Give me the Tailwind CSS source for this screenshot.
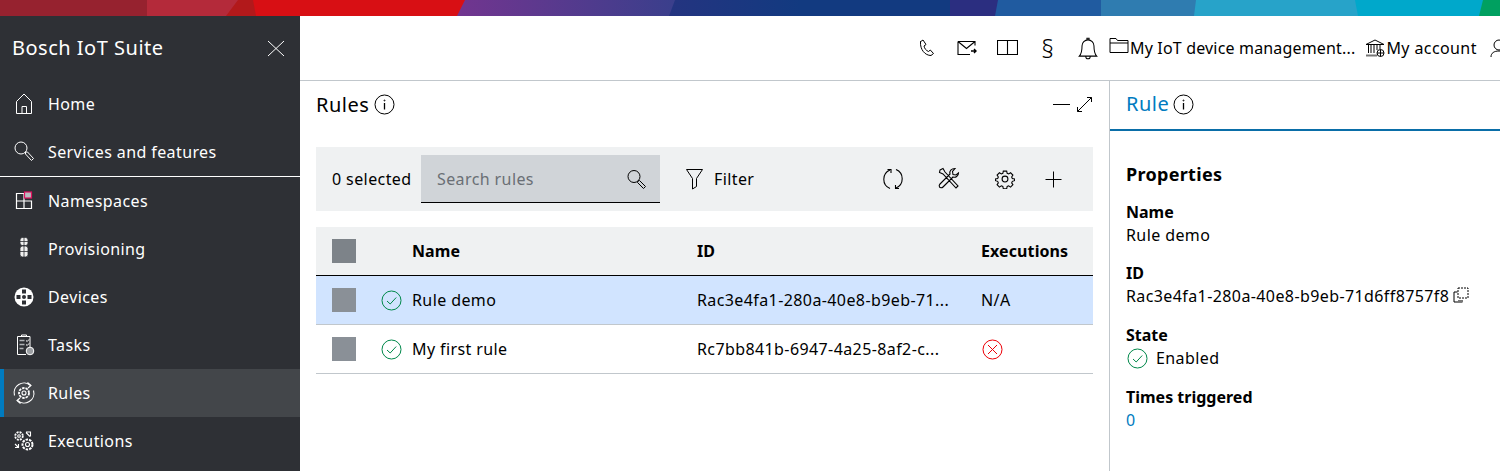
<!DOCTYPE html>
<html lang="en">
  <head>
    <meta charset="UTF-8" />
    <title>Bosch IoT Suite - Rules</title>
    <script src="https://cdn.jsdelivr.net/npm/@tailwindcss/browser@4"></script>
  </head>
  <body class="w-[1500px] h-[471px] overflow-hidden bg-white font-['Noto_Sans',sans-serif] text-base tracking-[0.4px] text-black">
    <!-- colour band -->
    <svg class="block w-[1500px] h-4" viewBox="0 0 1500 16">
      <defs>
        <linearGradient id="purple" gradientUnits="userSpaceOnUse" x1="460" x2="675" y1="0" y2="0"><stop offset="0" stop-color="#71358f" /><stop offset="1" stop-color="#3a3f8c" /></linearGradient>
        <linearGradient id="navy" gradientUnits="userSpaceOnUse" x1="670" x2="800" y1="0" y2="0"><stop offset="0" stop-color="#243480" /><stop offset="1" stop-color="#123a80" /></linearGradient>
      </defs>
      <rect width="1500" height="16" fill="#96222f" />
      <rect x="147" width="1353" height="16" fill="#b42a3a" />
      <polygon points="238,0 1500,0 1500,16 226,16" fill="#b2191b" />
      <polygon points="253,0 1500,0 1500,16 256,16" fill="#d80f14" />
      <polygon points="465,0 1500,0 1500,16 457,16" fill="url(#purple)" />
      <polygon points="675,0 1500,0 1500,16 669,16" fill="url(#navy)" />
      <rect x="950" width="550" height="16" fill="#2b2e80" />
      <polygon points="998,0 1500,0 1500,16 995,16" fill="#205ba0" />
      <rect x="1101" width="399" height="16" fill="#2f7cb0" />
      <polygon points="1196,0 1500,0 1500,16 1194,16" fill="#27a3c9" />
      <polygon points="1355,0 1500,0 1500,16 1358,16" fill="#00a8cb" />
      <polygon points="1483,0 1500,0 1500,16 1479,16" fill="#00a060" />
    </svg>

    <div class="flex h-[455px]">
      <!-- sidebar -->
      <aside class="w-[300px] shrink-0 bg-[#2e3035] text-white">
        <div class="flex items-center justify-between h-16 pl-3 pr-[15px]">
          <span class="text-xl tracking-[0.5px]">Bosch IoT Suite</span>
          <svg class="w-[18px] h-[18px]" viewBox="0 0 18 18" fill="none" stroke="#fff" stroke-width="1"><path d="M1 2l16 15M17 2L1 17" /></svg>
        </div>
        <a class="flex items-center h-12 pl-3 gap-3">
          <svg class="w-6 h-6 shrink-0" viewBox="0 0 24 24" fill="none" stroke="#fff" stroke-width="1"><path d="M4.500 21.500v-12L12 2l7.500 7.500v12zM10 21.500v-7h4.500v7" /></svg>
          <span>Home</span>
        </a>
        <a class="flex items-center h-12 pl-3 gap-3">
          <svg class="w-6 h-6 shrink-0" viewBox="0 0 24 24" fill="none" stroke="#fff" stroke-width="1"><circle cx="9" cy="8" r="6" /><path d="M13.500 12l2 0 6 6.500-2 2-6-6.500z" /></svg>
          <span>Services and features</span>
        </a>
        <div class="h-px bg-white"></div>
        <a class="flex items-center h-12 pl-3 gap-3">
          <svg class="w-6 h-6 shrink-0" viewBox="0 0 24 24" fill="none" stroke="#fff" stroke-width="1.200"><path d="M4.500 4.500h7.500v15H4.500zM4.500 12h15v7.500h-7.500" /><rect x="12.500" y="3" width="7" height="6" fill="#b9bcc0" stroke="#e0115f" /></svg>
          <span>Namespaces</span>
        </a>
        <a class="flex items-center h-12 pl-3 gap-3">
          <svg class="w-6 h-6 shrink-0" viewBox="0 0 24 24" fill="#f0f0f0" stroke="#2e3035" stroke-width="0.800"><rect x="8" y="0.500" width="8" height="8" rx="2.500" /><rect x="8" y="9" width="8" height="11" rx="2.500" /><path d="M12 1v19M8 4.500h8M8 14.500h8" fill="none" /></svg>
          <span>Provisioning</span>
        </a>
        <a class="flex items-center h-12 pl-3 gap-3">
          <svg class="w-6 h-6 shrink-0" viewBox="0 0 24 24"><circle cx="12" cy="12" r="9.500" fill="#fff" /><circle cx="12" cy="12" r="2" fill="#2e3035" /><g fill="#2e3035"><rect x="10" y="4.500" width="4" height="4" /><rect x="10" y="15.500" width="4" height="4" /><rect x="4.500" y="10" width="4" height="4" /><rect x="15.500" y="10" width="4" height="4" /></g></svg>
          <span>Devices</span>
        </a>
        <a class="flex items-center h-12 pl-3 gap-3">
          <svg class="w-6 h-6 shrink-0" viewBox="0 0 24 24" fill="none" stroke="#fff" stroke-width="1"><path d="M14 21.500H5.500V3.500H18v11M9.500 3.500V2h5v1.500" /><path d="M7.500 7.500h5M7.500 11.500h5M7.500 15.500h4" stroke="#b0b3b7" stroke-width="1.500" /><path d="M14 7.500l1.200 1 2-2.200M14 11.500l1.200 1 2-2.200" /><circle cx="18" cy="18" r="3.800" fill="#9b9ea2" /></svg>
          <span>Tasks</span>
        </a>
        <a class="flex items-center h-12 pl-2 gap-3 bg-[#43464a] border-l-4 border-[#007bc0]">
          <svg class="w-6 h-6 shrink-0" viewBox="0 0 24 24" fill="none" stroke="#fff" stroke-width="1.100"><path d="M2.500 14.500A9.800 9.800 0 0 1 18.500 4.500M21.500 9.500A9.800 9.800 0 0 1 5.500 19.500" /><path d="M15.500 1.500l3.500 3-3 2.500M8.500 22.500l-3.500-3 3-2.500" /><circle cx="12" cy="12" r="2" /><circle cx="12" cy="12" r="5" stroke-dasharray="2.500 1" stroke-width="1.800" /></svg>
          <span>Rules</span>
        </a>
        <a class="flex items-center h-12 pl-3 gap-3">
          <svg class="w-6 h-6 shrink-0" viewBox="0 0 24 24" fill="none" stroke="#fff" stroke-width="1.100"><circle cx="7" cy="7" r="3.800" stroke-dasharray="2 1" stroke-width="1.800" /><circle cx="7" cy="7" r="1.300" /><circle cx="15.500" cy="15.500" r="5" stroke-dasharray="2.500 1" stroke-width="2" /><circle cx="15.500" cy="15.500" r="2" /><path d="M14 3.500l4 4M14 3h4.500v4.500M3 15l3 3M6.500 15v3.500H3" /></svg>
          <span>Executions</span>
        </a>
      </aside>

      <div class="flex-1 flex flex-col min-w-0">
        <!-- header -->
        <header class="h-[65px] shrink-0 flex items-center pl-[617px] border-b border-[#c1c7cc] overflow-hidden">
          <svg class="shrink-0 w-[20px] h-[20px] mr-[20px]" viewBox="0 0 20 20" fill="none" stroke="#000" stroke-width="1"><path d="M3 4l3-2 3 4.500-2 1.500c.5 2.500 2 4.500 4.500 5.500l1.800-1.500 3.200 3.500-2.500 2c-6 0-11-6-10.500-13.500z" /></svg>
          <svg class="shrink-0 w-[20px] h-[20px] mr-[20px]" viewBox="0 0 20 20" fill="none" stroke="#000" stroke-width="1.100"><path d="M1 3.500h17v4M1 3.500v13h12M1 3.500l8.500 7 8.500-7" /><path d="M14 13h5M17 11l2 2-2 2" stroke-width="1.400" /></svg>
          <svg class="shrink-0 w-[21px] h-[20px] mr-[20px]" viewBox="0 0 21 20" fill="none" stroke="#000" stroke-width="1.100"><path d="M0.500 2.500h10v14h-10zM10.500 2.500h10v14h-10z" /></svg>
          <span class="shrink-0 w-5 mr-[19px] text-center text-[25px] leading-none font-light">§</span>
          <svg class="shrink-0 w-[22px] h-[26px] mr-[10px]" viewBox="0 0 20 24" fill="none" stroke="#000" stroke-width="0.950"><path d="M2 19.500c2-2 2.500-4 2.500-9.500a5.500 5.500 0 0 1 11 0c0 5.500.5 7.500 2.500 9.500zM8 20c0 2.500 4 2.500 4 0M9 4.500V3h2v1.500" /></svg>
          <svg class="shrink-0 w-[20px] h-[20px] mr-[1px] -translate-y-[2px]" viewBox="0 0 20 20" fill="none" stroke="#000" stroke-width="1"><path d="M1 16.500V2.500h6l1.500 2h10.500v12zM1 7h18" /></svg>
          <span class="shrink-0 whitespace-nowrap tracking-[0.17px]">My IoT device management...</span>
          <svg class="shrink-0 w-[20px] h-[20px] ml-[10px] mr-[1px]" viewBox="0 0 20 20" fill="none" stroke="#000" stroke-width="1"><path d="M1 6.500L10 2l9 4.500zM3.500 7v8M6 7v8M9 7v8M12 7v5M15 7v4" /><path d="M1 17.500h11" stroke="#777" stroke-width="2" /><circle cx="15.500" cy="15" r="3.500" fill="#fff" /><path d="M12 15h7M15.500 11.500v7" /></svg>
          <span class="shrink-0 whitespace-nowrap">My account</span>
          <svg class="shrink-0 w-[20px] h-[20px] ml-[12px]" viewBox="0 0 20 20" fill="none" stroke="#000" stroke-width="1"><circle cx="10" cy="7" r="5" /><path d="M2 19c0-4 3-6 8-6s8 2 8 6" /></svg>
        </header>

        <div class="flex-1 flex min-h-0">
          <!-- rules list -->
          <main class="w-[810px] shrink-0 border-r border-[#c1c7cc] pl-4 pr-4">
            <div class="flex items-center justify-between h-[47px]">
              <div class="flex items-center gap-[5px] text-xl tracking-[0.5px]">
                <span>Rules</span>
                <svg class="w-[21px] h-[21px]" viewBox="0 0 21 21" fill="none" stroke="#000" stroke-width="1"><circle cx="10.500" cy="10.500" r="9.500" /><path d="M10.500 9v6.500" stroke-width="1.300" /><circle cx="10.500" cy="6.500" r="0.500" /></svg>
              </div>
              <div class="flex items-center gap-[6px]">
                <span class="block w-[17px] h-px bg-black"></span>
                <svg class="w-[17px] h-[17px]" viewBox="0 0 17 17" fill="none" stroke="#000" stroke-width="1"><path d="M1.500 15.500L15.500 1.500M11 1.500h4.500V6M1.500 11v4.500H6" /></svg>
              </div>
            </div>

            <div class="mt-[19px] flex items-center h-16 bg-[#eff1f2] pl-4 pr-7">
              <span class="w-[89px] shrink-0">0 selected</span>
              <div class="flex items-center justify-between w-[239px] h-12 pl-4 pr-3 bg-[#d0d4d8] border-b border-black">
                <span class="text-[#6a6f75]">Search rules</span>
                <svg class="w-[24px] h-[24px]" viewBox="0 0 24 24" fill="none" stroke="#000" stroke-width="1"><circle cx="10" cy="9.500" r="6" /><path d="M14 14l1.500-.5 6 6-2 2-6-6z" /></svg>
              </div>
              <svg class="ml-[25px] w-[20px] h-[22px]" viewBox="0 0 20 22" fill="none" stroke="#000" stroke-width="1"><path d="M1.500 1.500h16l-6 9v8l-4 2.500V10.500z" /></svg>
              <span class="ml-[9px]">Filter</span>
              <svg class="ml-auto w-[24px] h-[24px]" viewBox="0 0 24 24" fill="none" stroke="#000" stroke-width="1.100"><path d="M9 21.500A10 10 0 0 1 9 3M15 2.500A10 10 0 0 1 15 21" /><path d="M6.500 2.500H10V6M18 21.500h-3.500V18" /></svg>
              <svg class="ml-[32px] w-[24px] h-[24px]" viewBox="0 0 24 24" fill="none" stroke="#000" stroke-width="1.100"><path d="M3 3l3-1.500L8 5l13 14-2 2L6 7 2.500 5.500zM21.500 6c0 3-3 5-5.500 4L6 20c-1 1-3 1-3.500 0S2 18 3 17L13 7c-1-3 1.500-5.500 5-5.500L15.500 4.500l.5 3 3 .5z" /></svg>
              <svg class="ml-[34px] w-[20px] h-[20px]" viewBox="0 0 24 24" fill="none" stroke="#000" stroke-width="1.300"><circle cx="12" cy="12" r="3.500" /><path d="M10 2.500h4l.6 2.700 1.800.8 2.300-1.500 2.800 2.800-1.500 2.300.8 1.800 2.700.6v2l-2.700.8-.8 1.800 1.500 2.300-2.800 2.800-2.300-1.500-1.800.8-.6 2.700h-4l-.6-2.700-1.800-.8-2.300 1.500-2.800-2.800 1.500-2.300-.8-1.800-2.700-.8v-2l2.700-.6.8-1.800-1.500-2.300 2.800-2.800 2.300 1.500 1.800-.8z" /></svg>
              <svg class="ml-[26px] w-[24px] h-[24px]" viewBox="0 0 24 24" fill="none" stroke="#000" stroke-width="1"><path d="M12.500 4.500v16M4.500 12.500h16" /></svg>
            </div>

            <!-- table -->
            <div class="mt-4">
              <div class="flex items-center h-[49px] bg-[#eff1f2] border-b border-black font-bold tracking-[0.1px]">
                <span class="ml-4 w-6 h-6 bg-[#7d8389]"></span>
                <span class="ml-[56px] w-[285px]">Name</span>
                <span class="w-[284px]">ID</span>
                <span>Executions</span>
              </div>
              <div class="flex items-center h-[49px] bg-[#d1e4ff] border-b border-[#c1c7cc]">
                <span class="ml-4 w-6 h-6 bg-[#8a9097]"></span>
                <svg class="ml-[25px] w-[21px] h-[21px]" viewBox="0 0 21 21" fill="none" stroke="#00884a" stroke-width="1"><circle cx="10.500" cy="10.500" r="9.500" /><path d="M6 11l3.200 3 6-6.500" /></svg>
                <span class="ml-[10px] w-[285px]">Rule demo</span>
                <span class="w-[284px]">Rac3e4fa1-280a-40e8-b9eb-71...</span>
                <span>N/A</span>
              </div>
              <div class="flex items-center h-[49px] border-b border-[#c1c7cc]">
                <span class="ml-4 w-6 h-6 bg-[#8a9097]"></span>
                <svg class="ml-[25px] w-[21px] h-[21px]" viewBox="0 0 21 21" fill="none" stroke="#00884a" stroke-width="1"><circle cx="10.500" cy="10.500" r="9.500" /><path d="M6 11l3.200 3 6-6.500" /></svg>
                <span class="ml-[10px] w-[285px]">My first rule</span>
                <span class="w-[284px]">Rc7bb841b-6947-4a25-8af2-c...</span>
                <svg class="w-[21px] h-[21px] ml-px" viewBox="0 0 21 21" fill="none" stroke="#ed0007" stroke-width="1"><circle cx="10.500" cy="10.500" r="9.500" /><path d="M6 6l9 9M15 6l-9 9" /></svg>
              </div>
            </div>
          </main>

          <!-- details -->
          <section class="flex-1 min-w-0 pl-4">
            <div class="-ml-4 h-[50px] border-b-2 border-[#0a6ea8] pl-4 pb-[2px] flex items-center gap-[4px] text-xl tracking-[0.5px] text-[#007bc0]">
              <span>Rule</span>
              <svg class="w-[21px] h-[21px]" viewBox="0 0 21 21" fill="none" stroke="#000" stroke-width="1"><circle cx="10.500" cy="10.500" r="9.500" /><path d="M10.500 9v6.500" stroke-width="1.300" /><circle cx="10.500" cy="6.500" r="0.500" /></svg>
            </div>
            <h2 class="mt-[30px] text-lg font-bold leading-[26px] tracking-[0.3px]">Properties</h2>
            <div class="mt-[14px] font-bold leading-[23px] tracking-normal">Name</div>
            <div class="leading-[23px]">Rule demo</div>
            <div class="mt-[15px] font-bold leading-[23px] tracking-normal">ID</div>
            <div class="flex items-center leading-[23px]">
              <span>Rac3e4fa1-280a-40e8-b9eb-71d6ff8757f8</span>
              <svg class="ml-[4px] w-[16px] h-[16px] -translate-y-[2px]" viewBox="0 0 16 16" fill="none" stroke="#000" stroke-width="1"><path d="M5 1h10v10H5z" stroke-dasharray="2 1" /><path d="M4.500 5H1v10h8.500" /><path d="M5 14h5" stroke="#777" stroke-width="2" /></svg>
            </div>
            <div class="mt-[16px] font-bold leading-[23px] tracking-normal">State</div>
            <div class="flex items-center gap-2 leading-[23px]">
              <svg class="ml-[1px] w-[21px] h-[21px]" viewBox="0 0 21 21" fill="none" stroke="#00884a" stroke-width="1"><circle cx="10.500" cy="10.500" r="9.500" /><path d="M6 11l3.200 3 6-6.500" /></svg>
              <span>Enabled</span>
            </div>
            <div class="mt-[16px] font-bold leading-[23px] tracking-normal">Times triggered</div>
            <div class="text-[#007bc0] leading-[22px]">0</div>
          </section>
        </div>
      </div>
    </div>
  </body>
</html>
